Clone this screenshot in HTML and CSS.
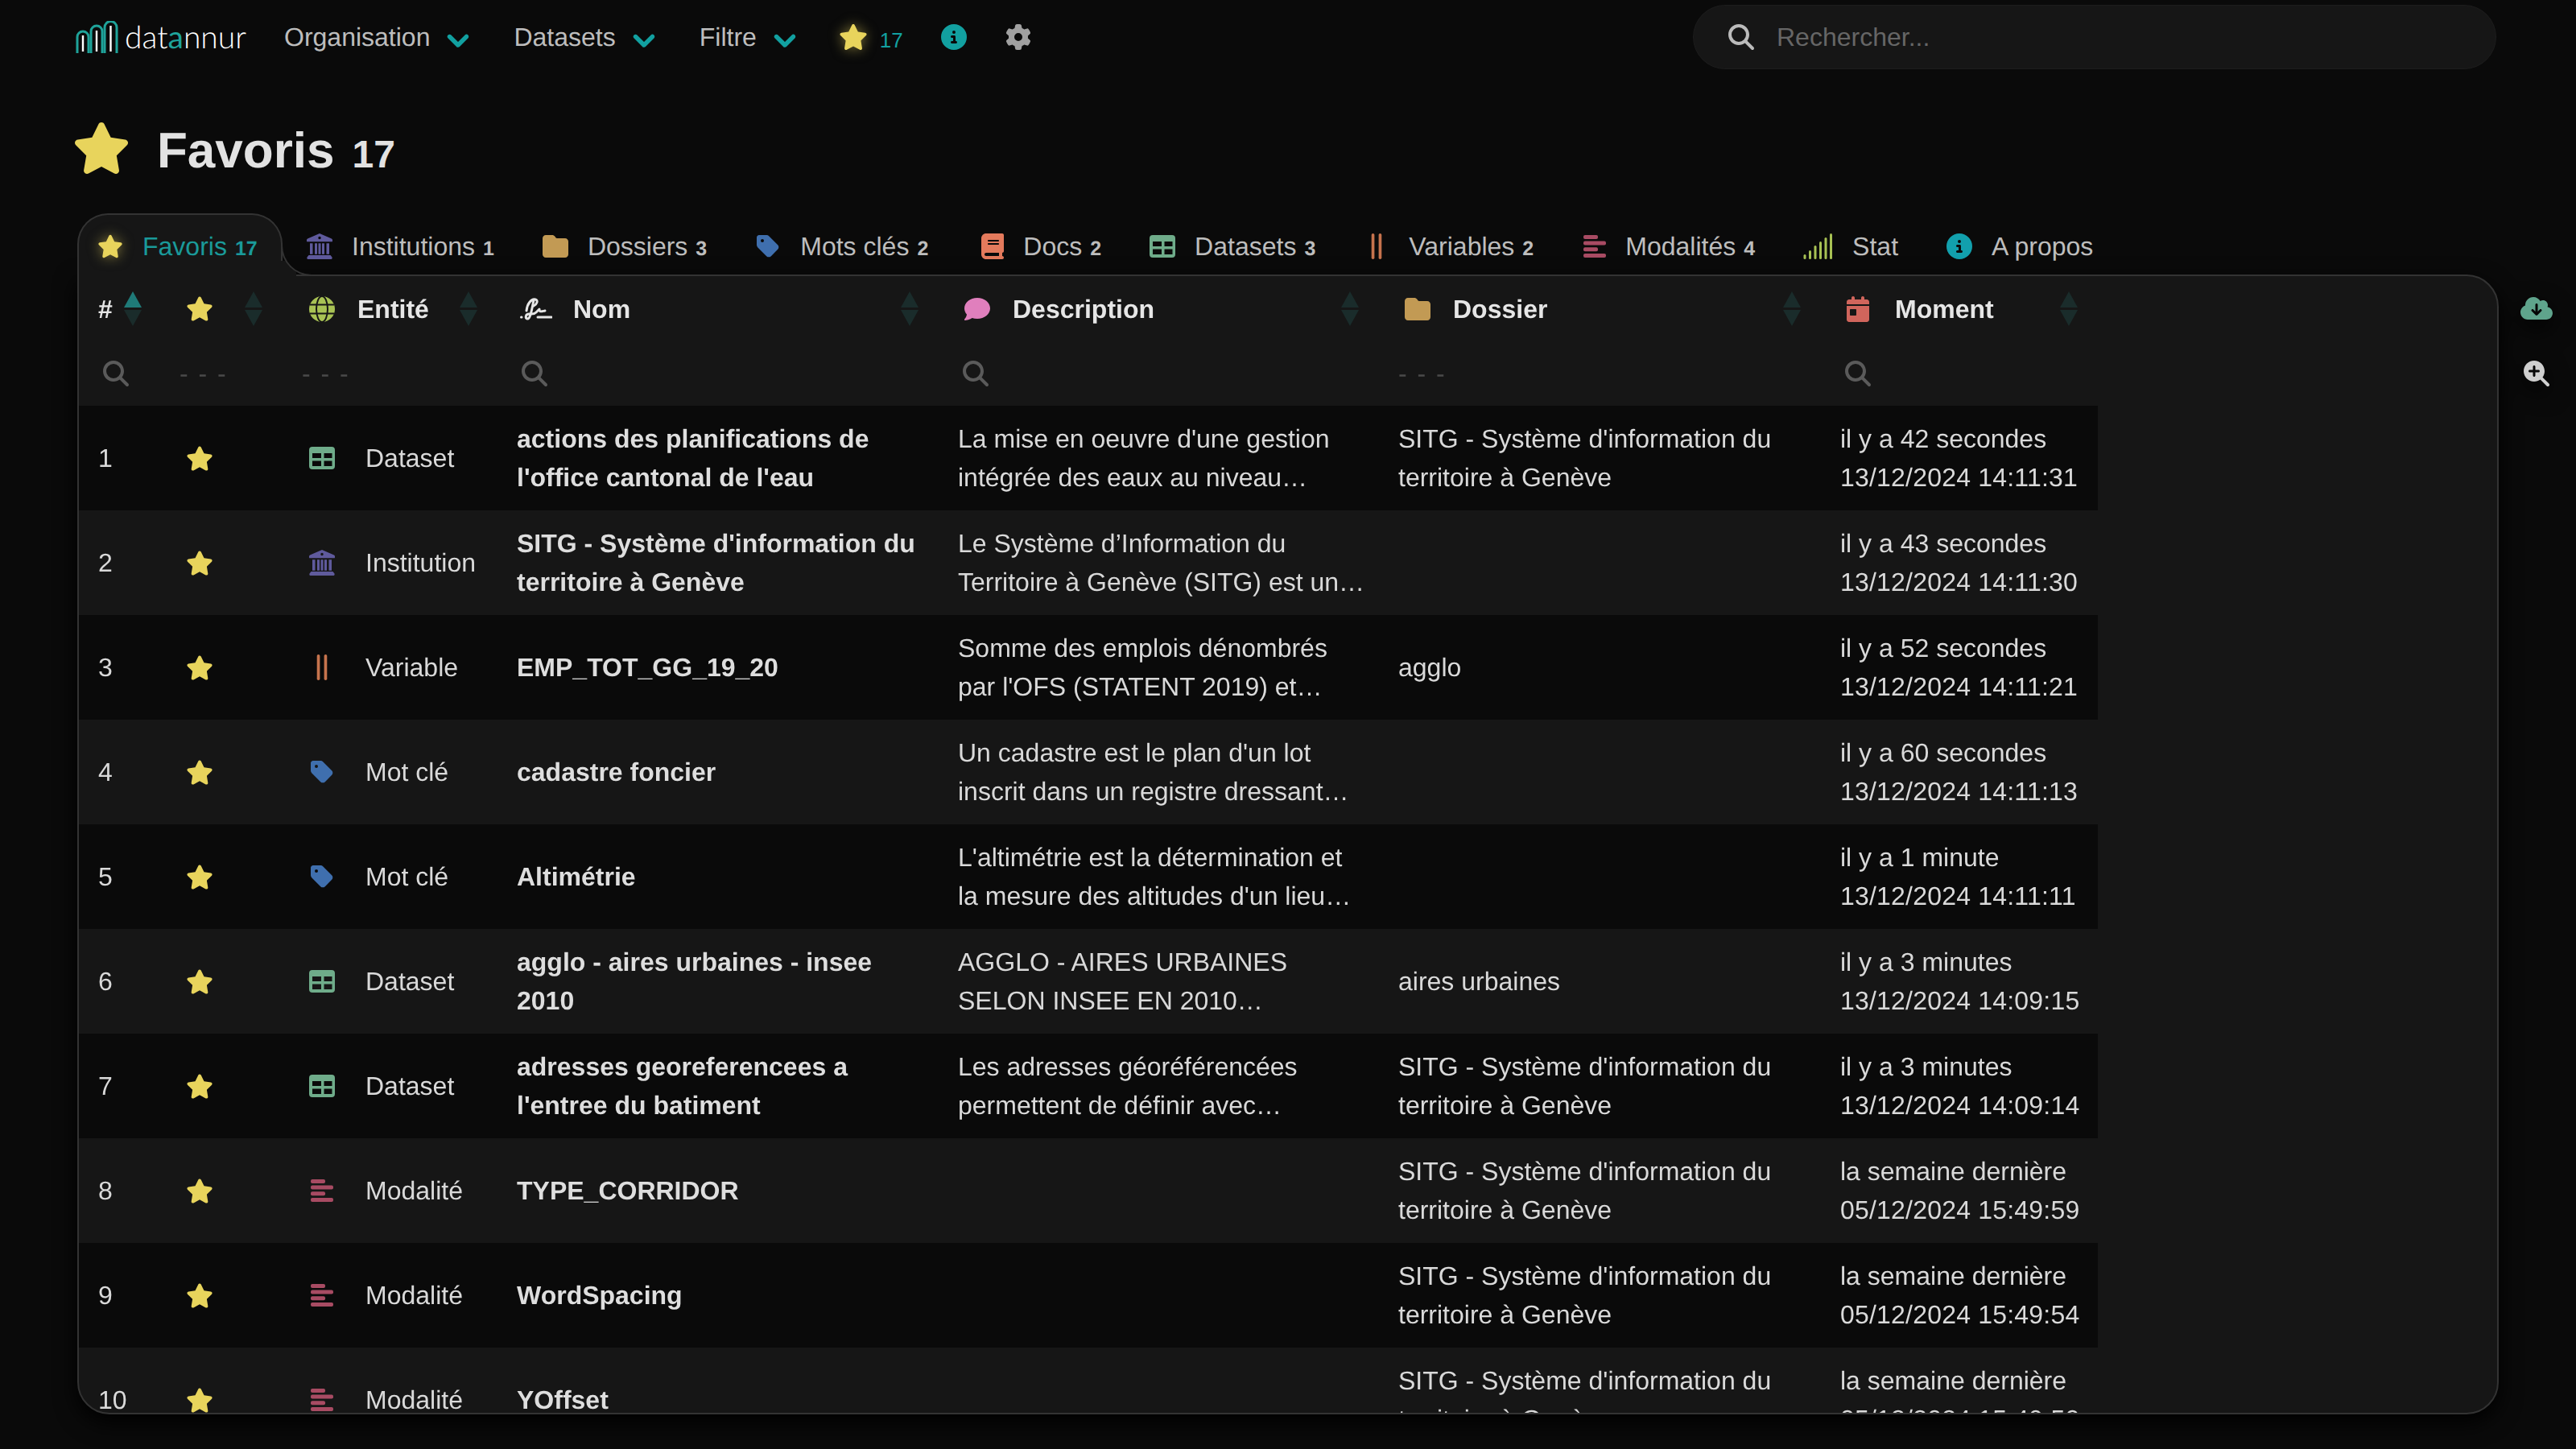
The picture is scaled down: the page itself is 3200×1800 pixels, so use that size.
FILE: index.html
```html
<!DOCTYPE html>
<html lang="fr">
<head>
    <meta charset="UTF-8">
    <title>Favoris - datannur</title>
    <link rel="stylesheet" href="styles.css">
</head>
<body>

<!-- Icones -->
<svg class="sprite" xmlns="http://www.w3.org/2000/svg">
    <symbol id="i-star" viewBox="0 0 576 512"><path d="M316.9 18C311.6 7 300.4 0 288.1 0s-23.4 7-28.8 18L195 150.3 51.4 171.5c-12 1.8-22 10.2-25.7 21.7s-.7 24.2 7.9 32.7L137.8 329 113.2 474.7c-2 12 3 24.2 12.9 31.3s23 8 33.8 2.3l128.3-68.5 128.3 68.5c10.8 5.7 23.9 4.9 33.8-2.3s14.9-19.3 12.9-31.3L438.5 329 542.7 225.9c8.6-8.5 11.7-21.2 7.9-32.7s-13.7-19.9-25.7-21.7L381.2 150.3 316.9 18z"/></symbol>
    <symbol id="i-search" viewBox="0 0 512 512"><path d="M416 208c0 45.9-14.9 88.3-40 122.7L502.6 457.4c12.5 12.5 12.5 32.8 0 45.3s-32.8 12.5-45.3 0L330.7 376c-34.4 25.2-76.8 40-122.7 40C93.1 416 0 322.9 0 208S93.1 0 208 0S416 93.1 416 208zM208 352a144 144 0 1 0 0-288 144 144 0 1 0 0 288z"/></symbol>
    <symbol id="i-zoom" viewBox="0 0 512 512"><path d="M416 208c0 45.9-14.9 88.3-40 122.7L502.6 457.4c12.5 12.5 12.5 32.8 0 45.3s-32.8 12.5-45.3 0L330.7 376c-34.4 25.2-76.8 40-122.7 40C93.1 416 0 322.9 0 208S93.1 0 208 0S416 93.1 416 208zM184 296c0 13.3 10.7 24 24 24s24-10.7 24-24V232h64c13.3 0 24-10.7 24-24s-10.7-24-24-24H232V120c0-13.3-10.7-24-24-24s-24 10.7-24 24v64H120c-13.3 0-24 10.7-24 24s10.7 24 24 24h64v64z"/></symbol>
    <symbol id="i-chevron" viewBox="0 0 512 512"><path stroke="currentColor" stroke-width="36" d="M233.4 406.6c12.5 12.5 32.8 12.5 45.3 0l192-192c12.5-12.5 12.5-32.8 0-45.3s-32.8-12.5-45.3 0L256 338.7 86.6 169.4c-12.5-12.5-32.8-12.5-45.3 0s-12.5 32.8 0 45.3l192 192z"/></symbol>
    <symbol id="i-info" viewBox="0 0 512 512"><path d="M256 512A256 256 0 1 0 256 0a256 256 0 1 0 0 512zM216 336h24V272H216c-13.3 0-24-10.7-24-24s10.7-24 24-24h48c13.3 0 24 10.7 24 24v88h8c13.3 0 24 10.7 24 24s-10.7 24-24 24H216c-13.3 0-24-10.7-24-24s10.7-24 24-24zm40-208a32 32 0 1 1 0 64 32 32 0 1 1 0-64z"/></symbol>
    <symbol id="i-gear" viewBox="0 0 512 512"><path d="M495.9 166.6c3.2 8.7 .5 18.4-6.4 24.6l-43.3 39.4c1.1 8.3 1.7 16.8 1.7 25.4s-.6 17.1-1.7 25.4l43.3 39.4c6.9 6.2 9.6 15.9 6.4 24.6c-4.4 11.9-9.7 23.3-15.8 34.3l-4.7 8.1c-6.6 11-14 21.4-22.1 31.2c-5.9 7.2-15.7 9.6-24.5 6.8l-55.7-17.7c-13.4 10.3-28.2 18.9-44 25.4l-12.5 57.1c-2 9.1-9 16.3-18.2 17.8c-13.8 2.3-28 3.5-42.5 3.5s-28.7-1.2-42.5-3.5c-9.2-1.5-16.2-8.7-18.2-17.8l-12.5-57.1c-15.8-6.5-30.6-15.1-44-25.4L83.1 425.9c-8.8 2.8-18.6 .3-24.5-6.8c-8.1-9.8-15.5-20.2-22.1-31.2l-4.7-8.1c-6.1-11-11.4-22.4-15.8-34.3c-3.2-8.7-.5-18.4 6.4-24.6l43.3-39.4C64.6 273.1 64 264.6 64 256s.6-17.1 1.7-25.4L22.4 191.2c-6.9-6.2-9.6-15.9-6.4-24.6c4.4-11.9 9.7-23.3 15.8-34.3l4.7-8.1c6.6-11 14-21.4 22.1-31.2c5.9-7.2 15.7-9.6 24.5-6.8l55.7 17.7c13.4-10.3 28.2-18.9 44-25.4l12.5-57.1c2-9.1 9-16.3 18.2-17.8C227.3 1.2 241.5 0 256 0s28.7 1.2 42.5 3.5c9.2 1.5 16.2 8.7 18.2 17.8l12.5 57.1c15.8 6.5 30.6 15.1 44 25.4l55.7-17.7c8.8-2.8 18.6-.3 24.5 6.8c8.1 9.8 15.5 20.2 22.1 31.2l4.7 8.1c6.1 11 11.4 22.4 15.8 34.3zM256 336a80 80 0 1 0 0-160 80 80 0 1 0 0 160z"/></symbol>
    <symbol id="i-folder" viewBox="0 0 512 512"><path d="M64 480H448c35.3 0 64-28.7 64-64V160c0-35.3-28.7-64-64-64H288c-10.1 0-19.6-4.7-25.6-12.8L243.2 57.6C231.1 41.5 212.1 32 192 32H64C28.7 32 0 60.7 0 96V416c0 35.3 28.7 64 64 64z"/></symbol>
    <symbol id="i-tag" viewBox="0 0 448 512"><path d="M0 80V229.5c0 17 6.7 33.3 18.7 45.3l176 176c25 25 65.5 25 90.5 0L418.7 317.3c25-25 25-65.5 0-90.5l-176-176c-12-12-28.3-18.7-45.3-18.7H48C21.5 32 0 53.5 0 80zm112 32a32 32 0 1 1 0 64 32 32 0 1 1 0-64z"/></symbol>
    <symbol id="i-book" viewBox="0 0 448 512"><path d="M96 0C43 0 0 43 0 96V416c0 53 43 96 96 96H384h32c17.7 0 32-14.3 32-32s-14.3-32-32-32V384c17.7 0 32-14.3 32-32V32c0-17.7-14.3-32-32-32H384 96zm0 384H352v64H96c-17.7 0-32-14.3-32-32s14.3-32 32-32zm32-240c0-8.8 7.2-16 16-16H336c8.8 0 16 7.2 16 16s-7.2 16-16 16H144c-8.8 0-16-7.2-16-16zm16 48H336c8.8 0 16 7.2 16 16s-7.2 16-16 16H144c-8.8 0-16-7.2-16-16s7.2-16 16-16z"/></symbol>
    <symbol id="i-table" viewBox="0 0 32 28"><path fill-rule="evenodd" d="M4 0H28a4 4 0 0 1 4 4V24a4 4 0 0 1-4 4H4a4 4 0 0 1-4-4V4a4 4 0 0 1 4-4zM4 8V14H15V8zM18.5 8V14H28.5V8zM4 17.5V24H15V17.5zM18.5 17.5V24H28.5V17.5z"/></symbol>
    <symbol id="i-landmark" viewBox="0 0 512 512"><path fill-rule="evenodd" d="M256 0 496 104c10 5 16 14 16 24v22c0 8-6 14-14 14H14c-8 0-14-6-14-14v-22c0-10 6-19 16-24zM256 60a28 28 0 1 0 0 56 28 28 0 1 0 0-56zM64 196h56v216H64zM160 196h48v216h-48zM232 196h48v216h-48zM304 196h48v216h-48zM392 196h56v216h-56zM40 432H472l32 40c6 10 2 40-16 40H24c-18 0-22-30-16-40z"/></symbol>
    <symbol id="i-bars" viewBox="0 0 24 28"><rect x="6.5" y="0" width="3.2" height="28" rx="1.6"/><rect x="14.3" y="0" width="3.2" height="28" rx="1.6"/></symbol>
    <symbol id="i-modal" viewBox="0 0 28 28"><rect x="0" y="0" width="18" height="5" rx="2"/><rect x="0" y="7.6" width="28" height="5" rx="2"/><rect x="0" y="15.2" width="18" height="5" rx="2"/><rect x="0" y="23" width="28" height="5" rx="2"/></symbol>
    <symbol id="i-stat" viewBox="0 0 36 32"><rect x="0" y="26" width="3" height="6" rx="1.5"/><rect x="6.5" y="21" width="3" height="11" rx="1.5"/><rect x="13" y="15" width="3" height="17" rx="1.5"/><rect x="19.5" y="10" width="3" height="22" rx="1.5"/><rect x="26" y="5" width="3" height="27" rx="1.5"/><rect x="32.5" y="0" width="3" height="32" rx="1.5"/></symbol>
    <symbol id="i-globe" viewBox="0 0 32 32"><circle cx="16" cy="16" r="16"/><g fill="none" stroke="#161616" stroke-width="2"><ellipse cx="16" cy="16" rx="7" ry="16"/><path d="M1 10.5H31M1 21.5H31"/></g></symbol>
    <symbol id="i-sign" viewBox="0 0 40 28"><g fill="none" stroke="currentColor" stroke-width="3" stroke-linecap="round" stroke-linejoin="round"><path d="M8 16C9 7 14 1 19 2C23 3 21 8 17 10"/><path d="M17 3C15 12 13 27 9 26C6 25 7 20 11 20C15 20 17 21 20 18L24 14C24 18 26 17 31 16"/><path d="M22 24H39"/><path d="M1.5 24H2"/></g></symbol>
    <symbol id="i-comment" viewBox="0 0 512 512"><path d="M512 240c0 114.9-114.6 208-256 208c-37.1 0-72.3-6.4-104.1-17.9c-11.9 8.7-31.3 20.6-54.3 30.6C73.6 471.1 44.7 480 16 480c-6.5 0-12.3-3.9-14.8-9.9c-2.5-6-1.1-12.8 3.4-17.4c.3-.3 .7-.7 1.3-1.4c1.1-1.2 2.8-3.1 4.9-5.7c4.1-5 9.6-12.4 15.2-21.6c10-16.6 19.5-38.4 21.4-62.9C17.7 326.8 0 285.1 0 240C0 125.1 114.6 32 256 32s256 93.1 256 208z"/></symbol>
    <symbol id="i-calendar" viewBox="0 0 448 512"><path d="M128 0c17.7 0 32 14.3 32 32V64H288V32c0-17.7 14.3-32 32-32s32 14.3 32 32V64h48c26.5 0 48 21.5 48 48v48H0V112C0 85.5 21.5 64 48 64H96V32c0-17.7 14.3-32 32-32zM0 192H448V464c0 26.5-21.5 48-48 48H48c-26.5 0-48-21.5-48-48V192zm80 64c-8.8 0-16 7.2-16 16v96c0 8.8 7.2 16 16 16h96c8.8 0 16-7.2 16-16V272c0-8.8-7.2-16-16-16H80z"/></symbol>
    <symbol id="i-cloud" viewBox="0 0 640 512"><path d="M144 480C64.5 480 0 415.5 0 336c0-62.8 40.2-116.2 96.2-135.9c-.1-2.7-.2-5.4-.2-8.1c0-88.4 71.6-160 160-160c59.3 0 111 32.2 138.7 80.2C409.9 102 428.3 96 448 96c53 0 96 43 96 96c0 12.2-2.3 23.8-6.4 34.6C596 238.4 640 290.1 640 352c0 70.7-57.3 128-128 128H144zm79-167l80 80c9.4 9.4 24.6 9.4 33.9 0l80-80c9.4-9.4 9.4-24.6 0-33.9s-24.6-9.4-33.9 0l-39 39V184c0-13.3-10.7-24-24-24s-24 10.7-24 24V318.1l-39-39c-9.4-9.4-24.6-9.4-33.9 0s-9.4 24.6 0 33.9z"/></symbol>
</svg>

<header class="nav">
    <a class="logo">
        <svg class="logo-arches" viewBox="0 0 54 40">
            <g fill="none" stroke="#1fa39a" stroke-width="3">
                <path d="M2 40V20a7 7 0 0 1 14 0V40"/>
                <path d="M19 40V13a7 7 0 0 1 14 0V40"/>
                <path d="M36 40V8a7.5 7.5 0 0 1 15 0V40"/>
            </g>
            <g stroke="#fff" stroke-width="2.4">
                <path d="M9 18V38M26 12V38M43.5 6V38"/>
            </g>
        </svg>
        <span class="logo-text">dat<b>a</b>nnur</span>
    </a>
    <div class="nav-item">Organisation <svg class="chevron"><use href="#i-chevron"/></svg></div>
    <div class="nav-item">Datasets <svg class="chevron"><use href="#i-chevron"/></svg></div>
    <div class="nav-item">Filtre <svg class="chevron"><use href="#i-chevron"/></svg></div>
    <div class="nav-fav"><svg class="star glow"><use href="#i-star"/></svg><span>17</span></div>
    <svg class="nav-icon teal"><use href="#i-info"/></svg>
    <svg class="nav-icon gray"><use href="#i-gear"/></svg>
    <label class="search">
        <svg class="search-icon"><use href="#i-search"/></svg>
        <input type="text" placeholder="Rechercher...">
    </label>
</header>

<h1 class="title">
    <svg class="title-star"><use href="#i-star"/></svg>
    <span>Favoris</span> <small>17</small>
</h1>

<!-- Onglets -->
<div class="tabs">
    <div class="tab active"><svg class="ic star glow first"><use href="#i-star"/></svg><span>Favoris</span><em>17</em></div>
    <div class="tab"><svg class="ic purple"><use href="#i-landmark"/></svg><span>Institutions</span><em>1</em></div>
    <div class="tab"><svg class="ic ochre"><use href="#i-folder"/></svg><span>Dossiers</span><em>3</em></div>
    <div class="tab"><svg class="ic blue"><use href="#i-tag"/></svg><span>Mots clés</span><em>2</em></div>
    <div class="tab"><svg class="ic orange narrow"><use href="#i-book"/></svg><span>Docs</span><em>2</em></div>
    <div class="tab"><svg class="ic green"><use href="#i-table"/></svg><span>Datasets</span><em>3</em></div>
    <div class="tab"><svg class="ic brick"><use href="#i-bars"/></svg><span>Variables</span><em>2</em></div>
    <div class="tab"><svg class="ic rose narrow"><use href="#i-modal"/></svg><span>Modalités</span><em>4</em></div>
    <div class="tab"><svg class="ic lime wide"><use href="#i-stat"/></svg><span>Stat</span></div>
    <div class="tab"><svg class="ic cyan"><use href="#i-info"/></svg><span>A propos</span></div>
</div>

<div class="content">
    <div class="panel">
        <table class="grid">
            <colgroup>
                <col class="col-num"><col class="col-fav"><col class="col-type"><col class="col-name"><col class="col-desc"><col class="col-dir"><col class="col-date">
            </colgroup>
            <thead>
                <tr class="head">
                    <th><div class="th"><span class="hash">#</span><span class="sort asc"><i></i><i></i></span></div></th>
                    <th><div class="th"><svg class="star shift"><use href="#i-star"/></svg><span class="sort"><i></i><i></i></span></div></th>
                    <th><div class="th"><svg class="ic lime"><use href="#i-globe"/></svg>Entité<span class="sort"><i></i><i></i></span></div></th>
                    <th><div class="th"><svg class="ic sign"><use href="#i-sign"/></svg>Nom<span class="sort"><i></i><i></i></span></div></th>
                    <th><div class="th"><svg class="ic pink"><use href="#i-comment"/></svg>Description<span class="sort"><i></i><i></i></span></div></th>
                    <th><div class="th"><svg class="ic ochre"><use href="#i-folder"/></svg>Dossier<span class="sort"><i></i><i></i></span></div></th>
                    <th><div class="th"><svg class="ic red narrow"><use href="#i-calendar"/></svg>Moment<span class="sort"><i></i><i></i></span></div></th>
                </tr>
                <tr class="filters">
                    <td><svg class="ic-filter"><use href="#i-search"/></svg></td>
                    <td><span class="dashes">- - -</span></td>
                    <td><span class="dashes">- - -</span></td>
                    <td><svg class="ic-filter"><use href="#i-search"/></svg></td>
                    <td><svg class="ic-filter"><use href="#i-search"/></svg></td>
                    <td><span class="dashes">- - -</span></td>
                    <td><svg class="ic-filter"><use href="#i-search"/></svg></td>
                </tr>
            </thead>
            <tbody>
                <tr>
                    <td>1</td><td><svg class="star shift"><use href="#i-star"/></svg></td>
                    <td><div class="type"><svg class="ic green"><use href="#i-table"/></svg>Dataset</div></td>
                    <td class="name">actions des planifications de l'office cantonal de l'eau</td>
                    <td>La mise en oeuvre d'une gestion intégrée des eaux au niveau…</td>
                    <td>SITG - Système d'information du territoire à Genève</td>
                    <td class="date">il y a 42 secondes<br><span class="stamp">13/12/2024 14:11:31</span></td>
                </tr>
                <tr>
                    <td>2</td><td><svg class="star shift"><use href="#i-star"/></svg></td>
                    <td><div class="type"><svg class="ic purple"><use href="#i-landmark"/></svg>Institution</div></td>
                    <td class="name">SITG - Système d'information du territoire à Genève</td>
                    <td>Le Système d’Information du Territoire à Genève (SITG) est un…</td>
                    <td></td>
                    <td class="date">il y a 43 secondes<br><span class="stamp">13/12/2024 14:11:30</span></td>
                </tr>
                <tr>
                    <td>3</td><td><svg class="star shift"><use href="#i-star"/></svg></td>
                    <td><div class="type"><svg class="ic brick"><use href="#i-bars"/></svg>Variable</div></td>
                    <td class="name">EMP_TOT_GG_19_20</td>
                    <td>Somme des emplois dénombrés par l'OFS (STATENT 2019) et…</td>
                    <td>agglo</td>
                    <td class="date">il y a 52 secondes<br><span class="stamp">13/12/2024 14:11:21</span></td>
                </tr>
                <tr>
                    <td>4</td><td><svg class="star shift"><use href="#i-star"/></svg></td>
                    <td><div class="type"><svg class="ic blue"><use href="#i-tag"/></svg>Mot clé</div></td>
                    <td class="name">cadastre foncier</td>
                    <td>Un cadastre est le plan d'un lot inscrit dans un registre dressant…</td>
                    <td></td>
                    <td class="date">il y a 60 secondes<br><span class="stamp">13/12/2024 14:11:13</span></td>
                </tr>
                <tr>
                    <td>5</td><td><svg class="star shift"><use href="#i-star"/></svg></td>
                    <td><div class="type"><svg class="ic blue"><use href="#i-tag"/></svg>Mot clé</div></td>
                    <td class="name">Altimétrie</td>
                    <td>L'altimétrie est la détermination et<br>la mesure des altitudes d'un lieu…</td>
                    <td></td>
                    <td class="date">il y a 1 minute<br><span class="stamp">13/12/2024 14:11:11</span></td>
                </tr>
                <tr>
                    <td>6</td><td><svg class="star shift"><use href="#i-star"/></svg></td>
                    <td><div class="type"><svg class="ic green"><use href="#i-table"/></svg>Dataset</div></td>
                    <td class="name">agglo - aires urbaines - insee 2010</td>
                    <td>AGGLO - AIRES URBAINES SELON INSEE EN 2010…</td>
                    <td>aires urbaines</td>
                    <td class="date">il y a 3 minutes<br><span class="stamp">13/12/2024 14:09:15</span></td>
                </tr>
                <tr>
                    <td>7</td><td><svg class="star shift"><use href="#i-star"/></svg></td>
                    <td><div class="type"><svg class="ic green"><use href="#i-table"/></svg>Dataset</div></td>
                    <td class="name">adresses georeferencees a l'entree du batiment</td>
                    <td>Les adresses géoréférencées permettent de définir avec…</td>
                    <td>SITG - Système d'information du territoire à Genève</td>
                    <td class="date">il y a 3 minutes<br><span class="stamp">13/12/2024 14:09:14</span></td>
                </tr>
                <tr>
                    <td>8</td><td><svg class="star shift"><use href="#i-star"/></svg></td>
                    <td><div class="type"><svg class="ic rose narrow"><use href="#i-modal"/></svg>Modalité</div></td>
                    <td class="name">TYPE_CORRIDOR</td>
                    <td></td>
                    <td>SITG - Système d'information du territoire à Genève</td>
                    <td class="date">la semaine dernière<br><span class="stamp">05/12/2024 15:49:59</span></td>
                </tr>
                <tr>
                    <td>9</td><td><svg class="star shift"><use href="#i-star"/></svg></td>
                    <td><div class="type"><svg class="ic rose narrow"><use href="#i-modal"/></svg>Modalité</div></td>
                    <td class="name">WordSpacing</td>
                    <td></td>
                    <td>SITG - Système d'information du territoire à Genève</td>
                    <td class="date">la semaine dernière<br><span class="stamp">05/12/2024 15:49:54</span></td>
                </tr>
                <tr>
                    <td>10</td><td><svg class="star shift"><use href="#i-star"/></svg></td>
                    <td><div class="type"><svg class="ic rose narrow"><use href="#i-modal"/></svg>Modalité</div></td>
                    <td class="name">YOffset</td>
                    <td></td>
                    <td>SITG - Système d'information du territoire à Genève</td>
                    <td class="date">la semaine dernière<br><span class="stamp">05/12/2024 15:49:50</span></td>
                </tr>
            </tbody>
        </table>
    </div>
    <div class="tools">
        <svg class="tool-cloud"><use href="#i-cloud"/></svg>
        <svg class="tool-zoom"><use href="#i-zoom"/></svg>
    </div>
</div>

</body>
</html>
```

FILE: styles.css
```css
/* Base */
body {
    margin: 0;
    height: 1800px;
    overflow: hidden;
    background-color: #0a0a0a;
    color: #d9d9d9;
    font-family: "Liberation Sans", Arial, sans-serif;
    font-size: 32px;
    line-height: 48px;
    text-rendering: geometricPrecision;
}

svg {
    fill: currentColor;
    flex: none;
}

.sprite {
    display: none;
}

/* Couleurs des entites */
.star { color: #e8d45c; width: 34px; height: 31px; }
.glow { filter: drop-shadow(0 0 8px rgba(232, 212, 92, 0.55)); }
.teal { color: #12a0a0; }
.gray { color: #a0a0a0; }
.purple { color: #5f5a9c; }
.ochre { color: #c29a54; }
.blue { color: #3f6fae; }
.orange { color: #e47a5c; }
.green { color: #6fac8a; }
.brick { color: #c6734d; }
.rose { color: #a84b63; }
.lime { color: #a8c254; }
.cyan { color: #12a0ad; }
.pink { color: #e07fbd; }
.red { color: #d0655c; }

/* Barre du haut */
.nav {
    display: flex;
    align-items: center;
    height: 92px;
    padding-left: 94px;
    padding-right: 99px;
}

.logo {
    display: flex;
    align-items: flex-end;
    width: 259px;
    height: 40px;
    color: #fff;
}

.logo-arches {
    width: 54px;
    height: 40px;
}

.logo-text {
    margin-left: 7px;
    font-family: Lato, sans-serif;
    font-weight: 300;
    font-size: 39px;
    line-height: 40px;
}

.logo-text b {
    font-weight: 400;
    color: #1fa39a;
}

.nav-item {
    display: flex;
    align-items: center;
    gap: 21px;
    margin-right: 55px;
    color: #bdbdbd;
}

.chevron {
    width: 28px;
    height: 28px;
    margin-top: 5px;
    color: #12a0a0;
}

.nav-fav {
    display: flex;
    align-items: center;
    gap: 15px;
    margin-left: -2px;
    margin-right: 47px;
    color: #12a0a0;
    font-size: 26px;
}

.nav-fav .star {
    width: 36px;
    height: 32px;
}

.nav-fav span {
    margin-top: 8px;
}

.nav-icon {
    width: 32px;
    height: 32px;
    margin-right: 48px;
}

.search {
    display: flex;
    align-items: center;
    width: 998px;
    height: 80px;
    margin-left: auto;
    padding-left: 43px;
    box-sizing: border-box;
    background-color: #161616;
    border: 1px solid #1d1d1d;
    border-radius: 40px;
}

.search-icon {
    width: 32px;
    height: 32px;
    color: #bbb;
}

.search input {
    flex: 1;
    margin-left: 26px;
    background: none;
    border: none;
    outline: none;
    color: #ccc;
    font: inherit;
}

.search input::placeholder {
    color: #666;
    opacity: 1;
}

/* Titre */
.title {
    display: flex;
    align-items: baseline;
    height: 173px;
    margin: 0;
    padding-left: 90px;
    box-sizing: border-box;
    color: #e2e2e2;
    font-size: 62px;
    line-height: 191px;
    font-weight: bold;
}

.title-star {
    align-self: center;
    width: 72px;
    height: 64px;
    margin-top: 10px;
    margin-right: 33px;
    color: #e8d45c;
}

.title small {
    margin-left: 22px;
    font-size: 48px;
}

/* Onglets */
.tabs {
    display: flex;
    height: 76px;
    margin-left: 96px;
    color: #bdbdbd;
}

.tab {
    display: flex;
    align-items: center;
    padding: 6px 30px 0;
}

.tab span {
    margin-left: 24px;
}

.tab em {
    margin-left: 10px;
    margin-top: 6px;
    font-style: normal;
    font-weight: bold;
    font-size: 25px;
}

.tab .orange {
    margin-left: 6px;
}

.tab .rose {
    margin-left: 2px;
}

.tab.active {
    position: relative;
    z-index: 2;
    width: 255px;
    box-sizing: border-box;
    height: 78px;
    padding-top: 2px;
    padding-right: 0;
    background-color: #161616;
    border: 2px solid #333;
    border-bottom: none;
    border-radius: 38px 38px 0 0;
    color: #1a9a9a;
}

/* arrondi concave a droite de l'onglet actif */
.tab.active::after {
    content: "";
    position: absolute;
    right: -38px;
    bottom: 0;
    width: 38px;
    height: 38px;
    box-sizing: border-box;
    border-left: 2px solid #333;
    border-bottom: 2px solid #333;
    border-bottom-left-radius: 38px;
    box-shadow: -19px 19px 0 #161616;
    clip-path: inset(0 0 0 -2px);
}

.first {
    margin-left: -7px;
}

.ic {
    width: 32px;
    height: 32px;
}

.narrow {
    width: 28px;
}

.wide {
    width: 37px;
}

/* Tableau */
.content {
    display: flex;
    margin-left: 96px;
    filter: drop-shadow(0 10px 14px #000);
}

.panel {
    position: relative;
    width: 3008px;
    height: 1416px;
    box-sizing: border-box;
    overflow: hidden;
    background-color: #161616;
    border: 2px solid #333;
    border-radius: 0 40px 40px 40px;
}

.grid {
    width: 2508px;
    table-layout: fixed;
    border-collapse: collapse;
}

.col-num { width: 101px; }
.col-fav { width: 152px; }
.col-type { width: 267px; }
.col-name { width: 548px; }
.col-desc { width: 547px; }
.col-dir { width: 549px; }
.col-date { width: 344px; }

.grid th,
.grid td {
    padding: 0 10px 0 24px;
    text-align: left;
}

.head th {
    height: 81px;
    padding-right: 25px;
    color: #e6e6e6;
    font-weight: bold;
}

.head th:first-child {
    padding-right: 23px;
}

.th {
    display: flex;
    align-items: center;
    gap: 28px;
}

.head th:nth-child(n+3) {
    padding-left: 32px;
}

.head th:nth-child(3) .th {
    margin-left: 1px;
}

.head th:nth-child(4) {
    padding-left: 28px;
}

.head th:nth-child(4) .th {
    gap: 26px;
}

.head th:nth-child(7) .th {
    gap: 32px;
}

.hash {
    width: 0;
}

.sort {
    display: flex;
    flex-direction: column;
    gap: 3px;
    margin-left: auto;
}

.sort i {
    display: block;
    width: 0;
    height: 0;
    border-left: 11px solid transparent;
    border-right: 11px solid transparent;
    border-bottom: 20px solid #1a2c2b;
}

.sort i:last-child {
    border-bottom: none;
    border-top: 20px solid #1a2c2b;
}

.sort.asc i:first-child {
    border-bottom-color: #1f7a78;
}

.shift {
    display: block;
    margin-left: 8px;
}

.sign {
    width: 40px;
    color: #e6e6e6;
}

.filters td {
    height: 80px;
}

.filters td:first-child,
.filters td:nth-child(4),
.filters td:nth-child(5),
.filters td:nth-child(7) {
    padding-left: 30px;
}

.ic-filter {
    display: block;
    width: 32px;
    height: 32px;
    color: #5a5a5a;
}

.dashes {
    color: #4a4a4a;
    letter-spacing: 2px;
}

tbody tr {
    height: 130px;
}

tbody tr:nth-child(odd) {
    background-color: #0a0a0a;
}

.type {
    display: flex;
    align-items: center;
    gap: 38px;
    margin-left: 9px;
}

.type .narrow {
    margin: 0 2px;
}

.name {
    color: #dedede;
    font-weight: bold;
}

.date {
    white-space: nowrap;
}

.stamp {
    letter-spacing: 0.2px;
}

/* Outils a droite */
.tools {
    display: flex;
    flex-direction: column;
    align-items: center;
    width: 40px;
    margin-left: 27px;
    padding-top: 26px;
}

.tool-cloud {
    width: 40px;
    height: 32px;
    color: #5fa48c;
}

.tool-zoom {
    width: 32px;
    height: 32px;
    margin-top: 49px;
    color: #cfcfcf;
}
```
